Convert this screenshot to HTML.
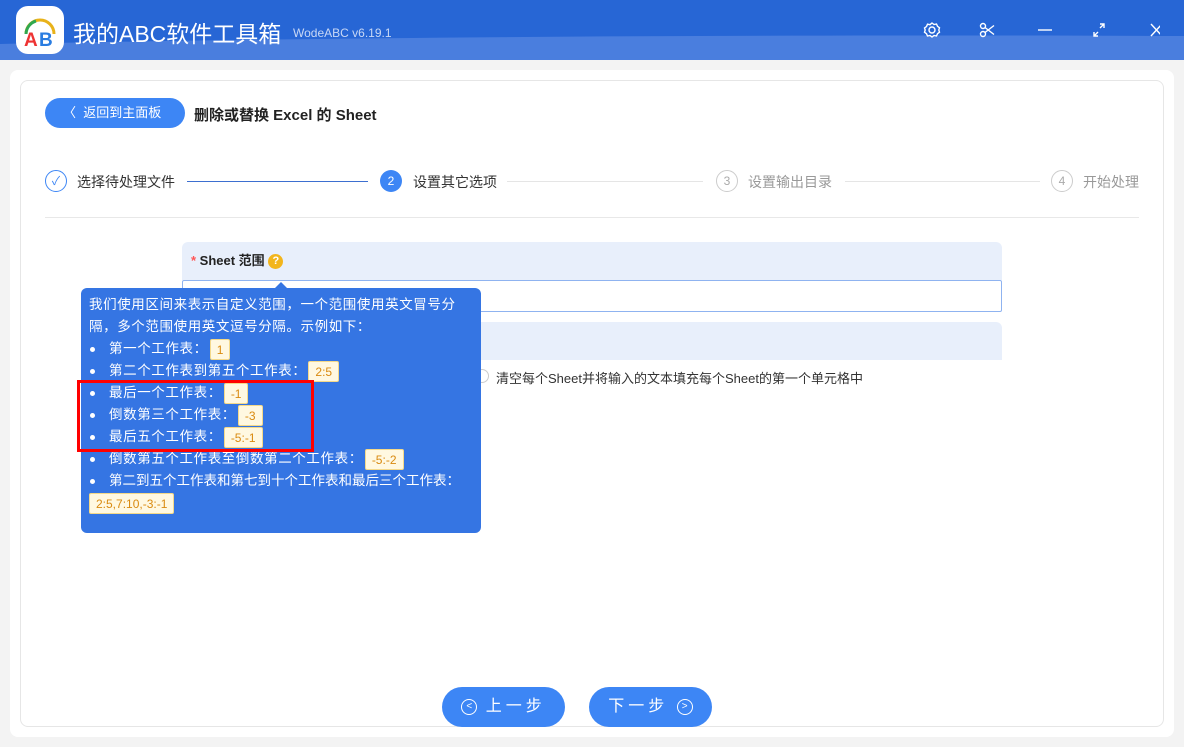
<!DOCTYPE html>
<html><head><meta charset="utf-8"><style>
*{margin:0;padding:0;box-sizing:border-box}
body{width:1184px;height:747px;overflow:hidden;background:#f3f3f3;font-family:"Liberation Sans","Noto Sans CJK SC",sans-serif;position:relative;color:#333}
.a{position:absolute}
.top{left:0;top:0;width:1184px;height:60px;background:#2766d5}
.logo{left:16px;top:6px;width:48px;height:48px;border-radius:12px;background:#fff}
.step{font-size:14px;color:#333;top:172px}
.c{width:22px;height:22px;border-radius:50%;top:170px;font-size:12px;text-align:center;line-height:20px}
.tag{display:inline-block;background:#fff8e1;border:1px solid #f4d98a;color:#d98a10;font-size:12px;padding:0 6px;height:21px;line-height:20px;border-radius:2px;vertical-align:middle;margin-left:2px;letter-spacing:0}
.tip{left:81px;top:288px;width:400px;height:245px;background:#3575e3;border-radius:6px;color:#fff;font-size:13.5px;padding:6px 8px;line-height:22px;letter-spacing:0.6px;white-space:nowrap}
.tip li{list-style:none;padding-left:20px;position:relative;height:22px}
.tip li:before{content:"";position:absolute;left:1px;top:9px;width:5px;height:5px;border-radius:50%;background:#fff}
.btn{top:687px;height:40px;width:123px;border-radius:20px;background:#3d86f5;color:#fff;font-size:16px;text-align:center;line-height:40px;letter-spacing:4px}
.ci{display:inline-block;width:16px;height:16px;border:1.5px solid #fff;border-radius:50%;font-size:10px;line-height:13px;letter-spacing:0;vertical-align:2px;text-align:center}
</style></head><body>
<div class="a top"></div>
<svg class="a" style="left:0;top:0" width="1184" height="60"><path d="M0 44 C300 38 700 34 1184 36 L1184 60 L0 60Z" fill="#4a7ede"/></svg>
<div class="a logo"><svg width="48" height="48"><path d="M10 28 A14 14 0 0 1 38 28" fill="none" stroke="#e8b21a" stroke-width="3"/><path d="M10 28 A14 14 0 0 1 20 15" fill="none" stroke="#2fa84f" stroke-width="3"/><text x="8" y="40" font-size="19" font-weight="bold" fill="#e33" font-family="Liberation Sans">A</text><text x="23" y="40" font-size="19" font-weight="bold" fill="#2a7de1" font-family="Liberation Sans">B</text></svg></div>
<div class="a" style="left:73px;top:15px;font-size:23px;color:#fff">我的ABC软件工具箱</div>
<div class="a" style="left:293px;top:26px;font-size:12px;color:#c9d8f5">WodeABC v6.19.1</div>
<svg class="a" style="left:920px;top:18px" width="240" height="24" fill="none" stroke="#fff" stroke-width="1.4">
<circle cx="12" cy="12" r="3"/><path d="M12 5l2 1.5 2.5-.5 1 2.3 2 1.5-.7 2.2.7 2.2-2 1.5-1 2.3-2.5-.5L12 19l-2-1.5-2.5.5-1-2.3-2-1.5.7-2.2L4.5 10l2-1.5 1-2.3 2.5.5z"/>
<circle cx="63" cy="8" r="2.5"/><circle cx="63" cy="16" r="2.5"/><path d="M65 9.5l9 7M65 14.5l9-7"/>
<path d="M118 12h14"/><path d="M174 18l4-4M180 10l4-4M180 6h4v4M174 14v4h4"/><path d="M231 6l11 12M242 6l-11 12"/></svg>
<div class="a" style="left:10px;top:70px;width:1164px;height:667px;background:#fff;border-radius:8px"></div>
<div class="a" style="left:20px;top:80px;width:1144px;height:647px;background:#fff;border:1px solid #e6e6e6;border-radius:8px"></div>
<div class="a" style="left:45px;top:98px;width:140px;height:30px;border-radius:15px;background:#3d86f5;color:#fff;font-size:13px;line-height:30px;padding-left:18px">〈&nbsp;&nbsp;返回到主面板</div>
<div class="a" style="left:194px;top:104px;font-size:15px;font-weight:bold;color:#222">删除或替换 Excel 的 Sheet</div>
<div class="a c" style="left:45px;border:1px solid #3d86f5;color:#3d86f5">✓</div>
<div class="a step" style="left:77px">选择待处理文件</div>
<div class="a" style="left:187px;top:181px;width:181px;height:1px;background:#3d6fd0"></div>
<div class="a c" style="left:380px;background:#3d86f5;color:#fff;line-height:22px">2</div>
<div class="a step" style="left:413px">设置其它选项</div>
<div class="a" style="left:507px;top:181px;width:196px;height:1px;background:#e5e5e5"></div>
<div class="a c" style="left:716px;border:1px solid #ccc;color:#aaa">3</div>
<div class="a step" style="left:748px;color:#999">设置输出目录</div>
<div class="a" style="left:845px;top:181px;width:195px;height:1px;background:#e5e5e5"></div>
<div class="a c" style="left:1051px;border:1px solid #ccc;color:#aaa">4</div>
<div class="a step" style="left:1083px;color:#999">开始处理</div>
<div class="a" style="left:45px;top:217px;width:1094px;height:1px;background:#e8e8e8"></div>
<div class="a" style="left:182px;top:242px;width:820px;height:38px;background:#e8effb;border-radius:6px 6px 0 0;font-size:13px;font-weight:bold;line-height:38px;padding-left:9px;color:#222"><span style="color:#f55">*</span> Sheet 范围 <span style="display:inline-block;width:15px;height:15px;border-radius:50%;background:#f2b51c;color:#fff;font-size:11px;text-align:center;line-height:15px;vertical-align:1px">?</span></div>
<div class="a" style="left:182px;top:280px;width:820px;height:32px;border:1px solid #8fb3f0;border-radius:2px;background:#fff"></div>
<div class="a" style="left:182px;top:322px;width:820px;height:38px;background:#e8effb;border-radius:6px 6px 0 0"></div>
<div class="a" style="left:475px;top:369px;width:14px;height:14px;border:1px solid #ccc;border-radius:50%"></div>
<div class="a" style="left:496px;top:368px;font-size:13px;color:#333">清空每个Sheet并将输入的文本填充每个Sheet的第一个单元格中</div>
<div class="a" style="left:274px;top:282px;width:0;height:0;border-left:7px solid transparent;border-right:7px solid transparent;border-bottom:7px solid #3575e3"></div>
<div class="a tip">我们使用区间来表示自定义范围，一个范围使用英文冒号分<br>隔，多个范围使用英文逗号分隔。示例如下：
<ul><li>第一个工作表：<span class="tag">1</span></li><li>第二个工作表到第五个工作表：<span class="tag">2:5</span></li><li>最后一个工作表：<span class="tag">-1</span></li><li>倒数第三个工作表：<span class="tag">-3</span></li><li>最后五个工作表：<span class="tag">-5:-1</span></li><li>倒数第五个工作表至倒数第二个工作表：<span class="tag">-5:-2</span></li><li style="letter-spacing:0">第二到五个工作表和第七到十个工作表和最后三个工作表：</li></ul><span class="tag" style="margin-left:0">2:5,7:10,-3:-1</span></div>
<div class="a" style="left:77px;top:380px;width:237px;height:72px;border:3px solid #f00"></div>
<div class="a btn" style="left:442px"><span class="ci">&lt;</span> 上一步</div>
<div class="a btn" style="left:589px">下一步 <span class="ci">&gt;</span></div>
</body></html>
